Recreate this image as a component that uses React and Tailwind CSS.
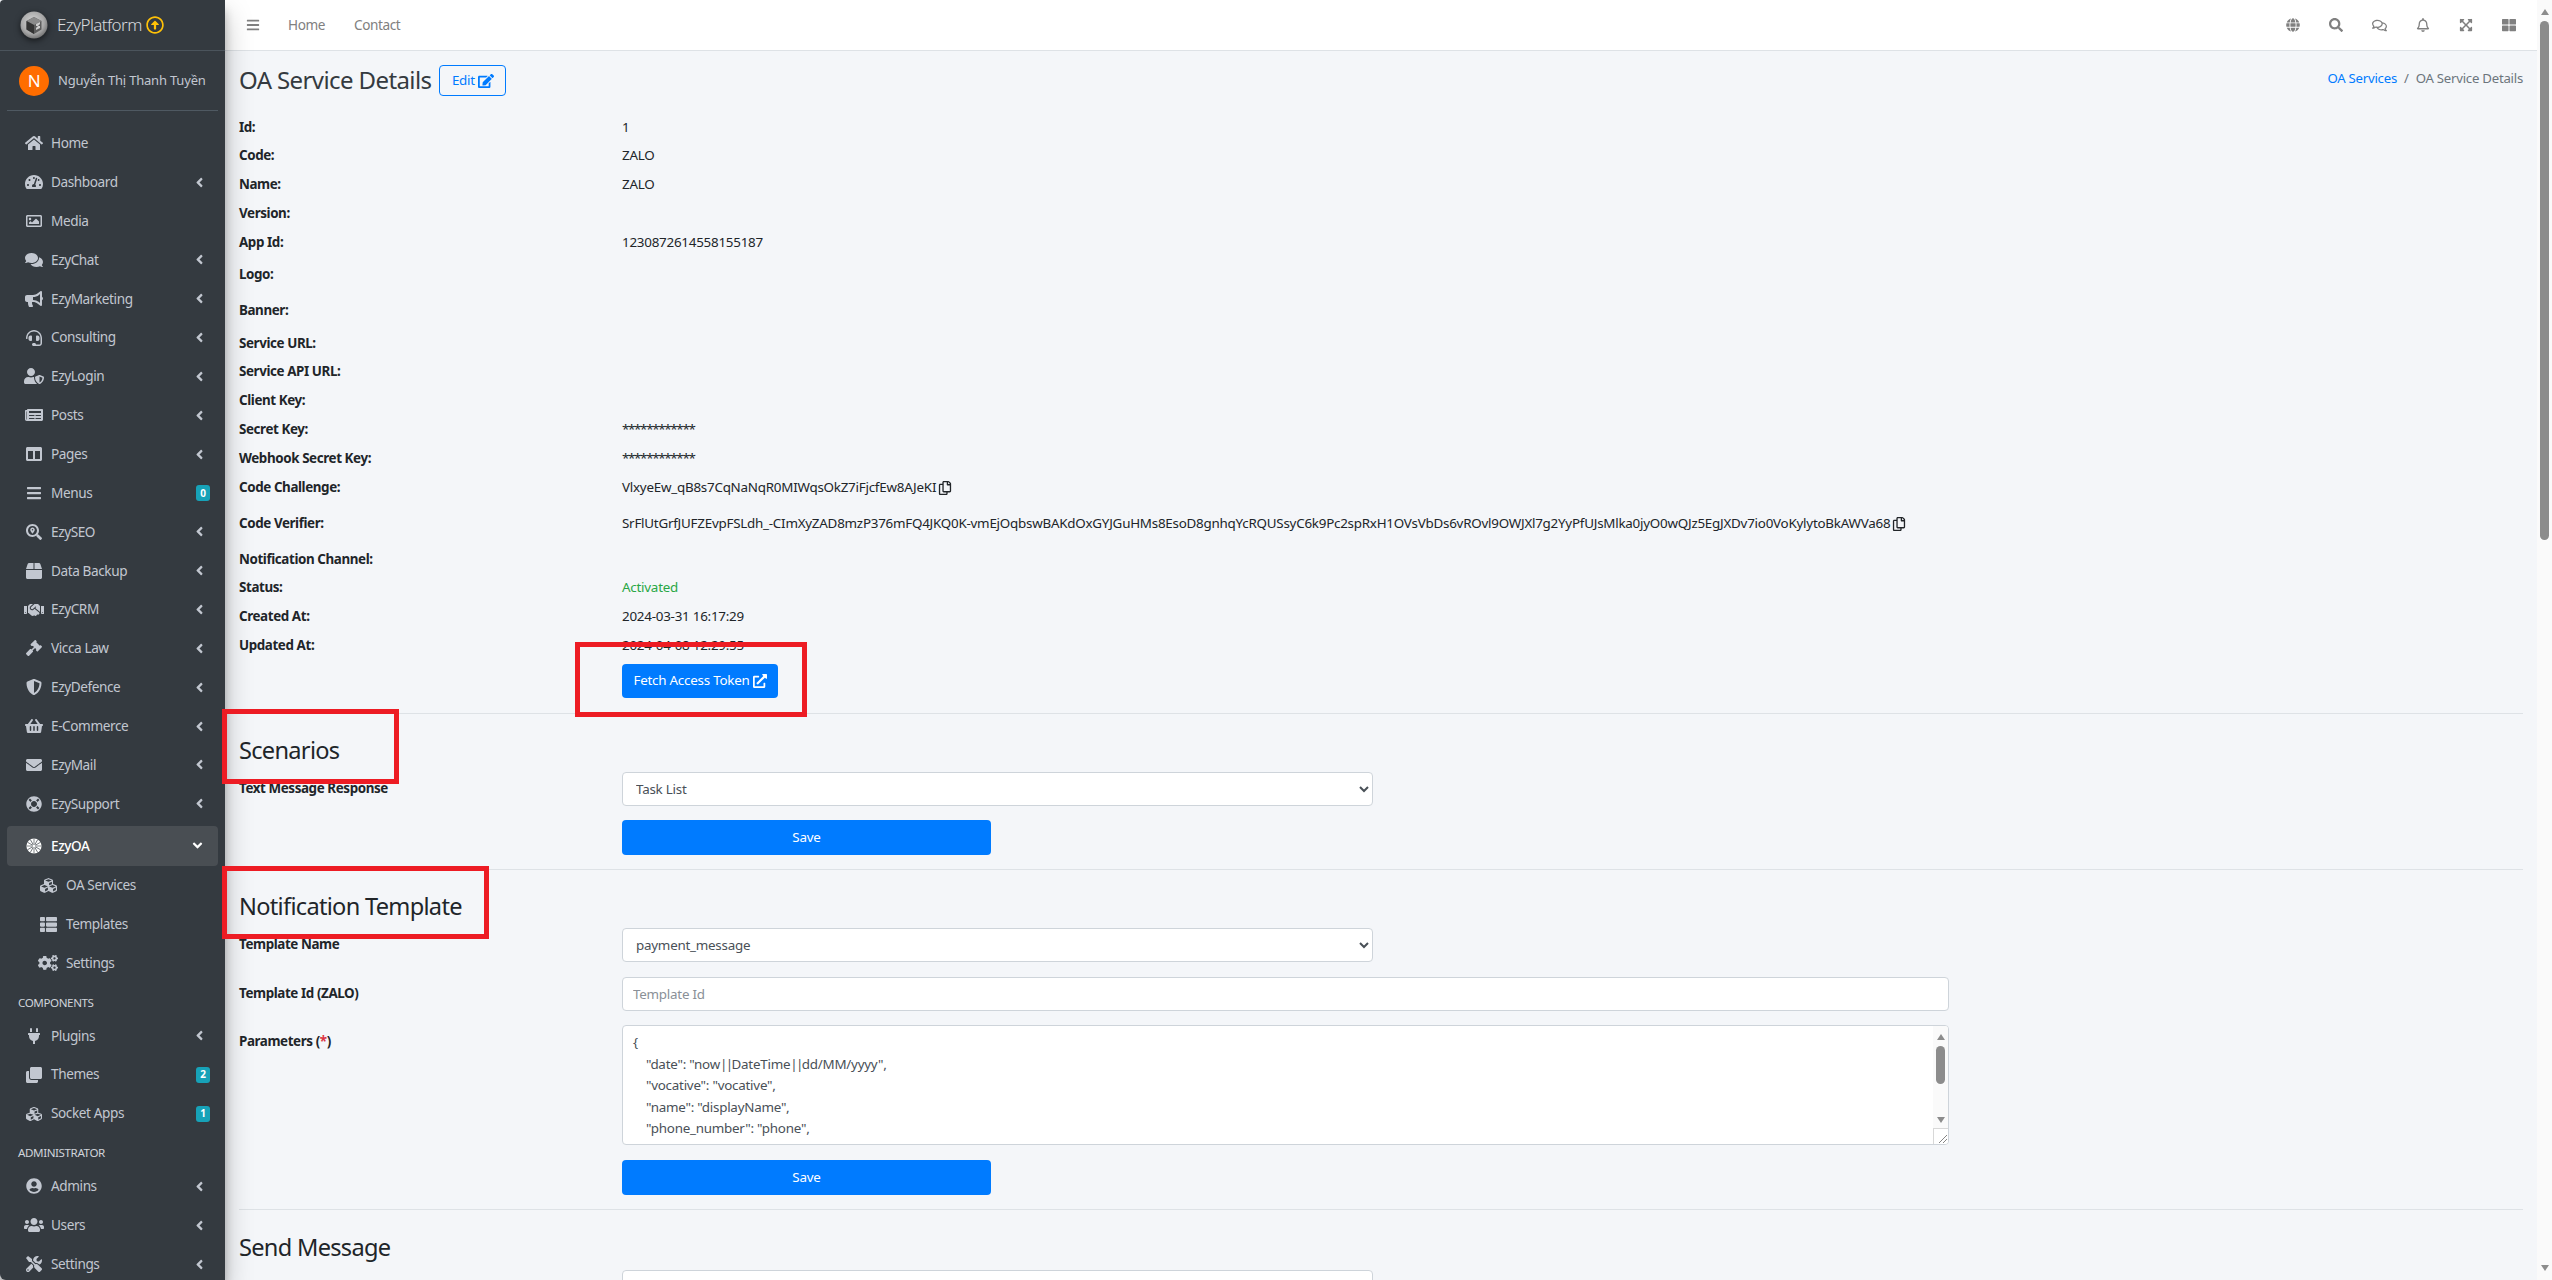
import React from "react";
import {
  FaHome, FaTachometerAlt, FaRegImage, FaComments, FaBullhorn, FaHeadset, FaUserShield, FaNewspaper, FaColumns, FaBars,
  FaSearchLocation, FaBox, FaHandshake, FaGavel, FaShieldAlt, FaShoppingBasket, FaEnvelope, FaLifeRing, FaCubes, FaThList,
  FaCogs, FaPlug, FaClone, FaUserCircle, FaUsers, FaTools, FaGlobe, FaSearch, FaRegComments, FaRegBell, FaExpandArrowsAlt,
  FaThLarge, FaEdit, FaExternalLinkAlt, FaRegCopy, FaAngleLeft, FaAngleDown, FaRegArrowAltCircleUp,
} from "react-icons/fa";

const FONT = "font-['Noto_Sans','Liberation_Sans',sans-serif]";

function Logo() {
  return (
    <svg width="28" height="28" viewBox="0 0 28 28" className="shrink-0 drop-shadow-[0_2px_3px_rgba(0,0,0,0.6)]">
      <defs>
        <radialGradient id="lg" cx="45%" cy="40%" r="60%">
          <stop offset="0%" stopColor="#d8d8d8" />
          <stop offset="70%" stopColor="#a8a8a8" />
          <stop offset="100%" stopColor="#777" />
        </radialGradient>
      </defs>
      <circle cx="14" cy="14" r="13.5" fill="url(#lg)" />
      <path d="M14 6l7.5 4v8.5L14 23l-7.5-4.5V10z" fill="#5c5c5c" />
      <path d="M14 6l7.5 4-7.5 4-7.5-4z" fill="#8a8a8a" />
      <path d="M14 14v9l-7.5-4.5V10z" fill="#333" />
      <path d="M16 13l4-2v2l-2 2 2 0v2l-4 2v-2l2-2-2 0z" fill="#ccc" />
    </svg>
  );
}

function OaIcon() {
  const spokes = [0, 30, 60, 90, 120, 150];
  return (
    <svg width="16" height="16" viewBox="0 0 16 16">
      <circle cx="8" cy="8" r="7.6" fill="#fff" />
      {spokes.map((a) => (
        <line key={a} x1="8" y1="0.5" x2="8" y2="15.5" stroke="#4b5055" strokeWidth="0.7" transform={`rotate(${a} 8 8)`} />
      ))}
      <circle cx="8" cy="8" r="1.5" fill="#fff" />
    </svg>
  );
}

function Item({ icon: Icon, label, arrow, badge, size = 16 }) {
  return (
    <div className="flex h-[38.85px] shrink-0 items-center pl-[22px] pr-[15px] text-[#c2c7d0]">
      <span className="flex w-[24px] justify-center"><Icon size={size} /></span>
      <span className="ml-[5px] flex-1 whitespace-nowrap">{label}</span>
      {arrow && <FaAngleLeft size={15} className="mr-[3px]" />}
      {badge && (
        <span className="flex h-[16px] w-[14px] items-center justify-center rounded-[3px] bg-[#17a2b8] text-[10px] font-bold tracking-normal text-white">{badge}</span>
      )}
    </div>
  );
}

function SubItem({ icon: Icon, label, size = 17 }) {
  return (
    <div className="flex h-[38.85px] shrink-0 items-center pl-[37px] text-[#c2c7d0]">
      <span className="flex w-[22px] justify-center"><Icon size={size} /></span>
      <span className="ml-[7px] whitespace-nowrap">{label}</span>
    </div>
  );
}

function Sidebar() {
  return (
    <aside className="z-10 flex h-[1280px] w-[225px] shrink-0 flex-col overflow-hidden rounded-tl-[4px] rounded-bl-[6px] bg-[#343a40] text-[13.6px] tracking-[-0.03em] shadow-[0_14px_28px_rgba(0,0,0,0.25),0_10px_10px_rgba(0,0,0,0.22)]">
      <div className="flex h-[51px] shrink-0 items-center gap-[9px] border-b border-[#4b545c] pl-[20px] pb-[1px]">
        <Logo />
        <span className="text-[17px] font-light tracking-[-0.035em] text-[#d8dbde]">EzyPlatform</span>
        <FaRegArrowAltCircleUp size={18} className="-ml-[5px] text-[#ffc107]" />
      </div>
      <div className="mx-[7px] flex h-[60px] shrink-0 items-center gap-[9px] border-b border-[#4f5962] pl-[12px] pt-[1px]">
        <span className="flex h-[30px] w-[30px] items-center justify-center rounded-full bg-[#ff6d00] text-[17px] text-white">N</span>
        <span className="whitespace-nowrap text-[13px] tracking-[-0.015em] text-[#c2c7d0]">Nguyễn Thị Thanh Tuyền</span>
      </div>
      <nav className="mt-[13px] flex shrink-0 flex-col">
        <Item icon={FaHome} label="Home" size={18} />
        <Item icon={FaTachometerAlt} label="Dashboard" arrow size={18} />
        <Item icon={FaRegImage} label="Media" />
        <Item icon={FaComments} label="EzyChat" arrow size={18} />
        <Item icon={FaBullhorn} label="EzyMarketing" arrow size={18} />
        <Item icon={FaHeadset} label="Consulting" arrow />
        <Item icon={FaUserShield} label="EzyLogin" arrow size={20} />
        <Item icon={FaNewspaper} label="Posts" arrow size={18} />
        <Item icon={FaColumns} label="Pages" arrow />
        <Item icon={FaBars} label="Menus" badge="0" />
        <Item icon={FaSearchLocation} label="EzySEO" arrow />
        <Item icon={FaBox} label="Data Backup" arrow />
        <Item icon={FaHandshake} label="EzyCRM" arrow size={20} />
        <Item icon={FaGavel} label="Vicca Law" arrow />
        <Item icon={FaShieldAlt} label="EzyDefence" arrow />
        <Item icon={FaShoppingBasket} label="E-Commerce" arrow size={18} />
        <Item icon={FaEnvelope} label="EzyMail" arrow />
        <Item icon={FaLifeRing} label="EzySupport" arrow />
        <div className="mx-[7px] mt-[2.7px] flex h-[40px] shrink-0 items-center rounded-[4px] bg-[#494e53] pl-[15px] pr-[13px] text-white">
          <span className="flex w-[24px] justify-center"><OaIcon /></span>
          <span className="ml-[5px] flex-1 font-medium">EzyOA</span>
          <FaAngleDown size={15} />
        </div>
        <SubItem icon={FaCubes} label="OA Services" />
        <SubItem icon={FaThList} label="Templates" />
        <SubItem icon={FaCogs} label="Settings" size={20} />
        <div className="flex h-[34px] shrink-0 items-center pl-[18px] pt-[6px] text-[11.6px] text-[#d0d4db]">COMPONENTS</div>
        <Item icon={FaPlug} label="Plugins" arrow />
        <Item icon={FaClone} label="Themes" badge="2" />
        <Item icon={FaCubes} label="Socket Apps" badge="1" />
        <div className="flex h-[34px] shrink-0 items-center pl-[18px] pt-[6px] text-[11.6px] text-[#d0d4db]">ADMINISTRATOR</div>
        <Item icon={FaUserCircle} label="Admins" arrow />
        <Item icon={FaUsers} label="Users" arrow size={20} />
        <Item icon={FaTools} label="Settings" arrow />
      </nav>
    </aside>
  );
}

function TopBar() {
  return (
    <header className="flex h-[51px] shrink-0 items-center border-b border-[#dee2e6] bg-white text-[13.6px] tracking-[-0.03em] text-[#808080]">
      <FaBars size={14} className="ml-[21px]" />
      <span className="ml-[28px]">Home</span>
      <span className="ml-[29px]">Contact</span>
      <div className="ml-auto mr-[21px] flex items-center gap-[29px]">
        <FaGlobe size={14} />
        <FaSearch size={14} />
        <FaRegComments size={15} />
        <FaRegBell size={14} />
        <FaExpandArrowsAlt size={14} />
        <FaThLarge size={14} />
      </div>
    </header>
  );
}

const rows = [
  { k: "Id:", v: "1", h: "h-[28px]" },
  { k: "Code:", v: "ZALO", h: "h-[29px]" },
  { k: "Name:", v: "ZALO", h: "h-[29px]" },
  { k: "Version:", h: "h-[29px]" },
  { k: "App Id:", v: "1230872614558155187", h: "h-[32px]" },
  { k: "Logo:", h: "h-[36px]" },
  { k: "Banner:", h: "h-[33px]" },
  { k: "Service URL:", h: "h-[28px]" },
  { k: "Service API URL:", h: "h-[29px]" },
  { k: "Client Key:", h: "h-[29px]" },
  { k: "Secret Key:", v: "************", stars: true, h: "h-[29px]" },
  { k: "Webhook Secret Key:", v: "************", stars: true, h: "h-[29px]" },
  { k: "Code Challenge:", v: "VlxyeEw_qB8s7CqNaNqR0MIWqsOkZ7iFjcfEw8AJeKI", copy: true, h: "h-[36px]" },
  { k: "Code Verifier:", v: "SrFlUtGrfJUFZEvpFSLdh_-CImXyZAD8mzP376mFQ4JKQ0K-vmEjOqbswBAKdOxGYJGuHMs8EsoD8gnhqYcRQUSsyC6k9Pc2spRxH1OVsVbDs6vROvl9OWJXl7g2YyPfUJsMlka0jyO0wQJz5EgJXDv7io0VoKylytoBkAWVa68", copy: true, h: "h-[36px]" },
  { k: "Notification Channel:", h: "h-[28px]" },
  { k: "Status:", v: "Activated", green: true, h: "h-[29px]" },
  { k: "Created At:", v: "2024-03-31 16:17:29", h: "h-[29px]" },
  { k: "Updated At:", v: "2024-04-08 12:29:55", h: "h-[33px]" },
];

function Heading({ children, cls }) {
  return <h2 className={`text-[23.6px] leading-[31px] tracking-[-0.03em] text-[#212529] ${cls}`}>{children}</h2>;
}

function Label({ children }) {
  return <label className="h-[34px] w-[383px] shrink-0 text-[13.4px] font-bold leading-[33px] tracking-[-0.03em] text-[#212529]">{children}</label>;
}

function Sel({ value }) {
  return (
    <select defaultValue={value} className="h-[34px] w-[751px] rounded-[4px] border border-[#ced4da] bg-white pl-[9px] pr-[5px] text-[13.4px] tracking-[-0.018em] text-[#495057]">
      <option value={value}>{value}</option>
    </select>
  );
}

function SaveBtn() {
  return <button className="flex h-[35px] w-[369px] items-center justify-center rounded-[4px] bg-[#007bff] text-[13.4px] text-white">Save</button>;
}

function TextArea() {
  const lines = [
    "{",
    <>{'    "date": "now'}<span className="tracking-[-0.12em]">||</span>DateTime<span className="tracking-[-0.12em]">||</span>{'dd/MM/yyyy",'}</>,
    '    "vocative": "vocative",',
    '    "name": "displayName",',
    '    "phone_number": "phone",',
  ];
  return (
    <div className="relative h-[120px] w-[1327px] overflow-hidden rounded-[4px] border border-[#ced4da] bg-white pl-[10px] pt-[6px] text-[13.4px] leading-[21.6px] tracking-[-0.018em] text-[#495057]">
      {lines.map((l, i) => (<div key={i} className="whitespace-pre">{l}</div>))}
      <div className="absolute right-0 top-0 flex h-[103px] w-[15px] flex-col items-center bg-[#fafafa]">
        <div className="mt-[8px] h-0 w-0 border-x-[4px] border-b-[6px] border-x-transparent border-b-[#8c8c8c]" />
        <div className="mt-[6px] h-[38px] w-[9px] rounded-full bg-[#8c8c8c]" />
        <div className="mt-auto mb-[6px] h-0 w-0 border-x-[4px] border-t-[6px] border-x-transparent border-t-[#8c8c8c]" />
      </div>
      <div className="absolute bottom-0 right-0 h-[16px] w-[15px] border-l border-t border-[#d8d8d8] bg-white">
        <svg width="14" height="15" viewBox="0 0 14 15"><path d="M5 14l8-8M9 14l4-4" stroke="#666" strokeWidth="0.8" /></svg>
      </div>
    </div>
  );
}

function Main() {
  return (
    <div className="flex min-w-0 flex-1 flex-col">
      <TopBar />
      <main className="flex-1 overflow-hidden bg-[#f4f6f9] px-[14px] text-[13.4px] tracking-[-0.018em] text-[#212529]">
        <div className="flex h-[62px] items-center pb-[3px]">
          <h1 className="pb-[2px] text-[24px] leading-[31px] tracking-[-0.025em] text-[#343a40]">OA Service Details</h1>
          <button className="ml-[8px] flex h-[31px] w-[67px] items-center justify-center gap-[3px] rounded-[4px] border border-[#007bff] text-[13.4px] text-[#007bff]">
            Edit <FaEdit size={16} />
          </button>
          <div className="ml-auto flex items-center gap-[7px] pb-[3px] text-[13.2px]">
            <span className="text-[#007bff]">OA Services</span>
            <span className="text-[#6c757d]">/</span>
            <span className="text-[#6c757d]">OA Service Details</span>
          </div>
        </div>
        <div className="flex flex-col">
          {rows.map((r) => (
            <div key={r.k} className={`flex ${r.h}`}>
              <div className="w-[383px] shrink-0 font-bold leading-[29px] tracking-[-0.03em]">{r.k}</div>
              {r.v && (
                <div className={`flex h-[29px] items-center gap-[2px] whitespace-nowrap ${r.green ? "text-[#28a745]" : ""} ${r.stars ? "tracking-[-0.1em]" : ""}`}>
                  {r.v}
                  {r.copy && <FaRegCopy size={14} />}
                </div>
              )}
            </div>
          ))}
        </div>
        <div className="pl-[383px]">
          <button className="flex h-[34px] w-[156px] items-center justify-center gap-[3px] rounded-[4px] bg-[#007bff] pb-[1px] text-white">
            Fetch Access Token <FaExternalLinkAlt size={14} />
          </button>
        </div>
        <hr className="mt-[15px] border-[#dee2e6]" />
        <Heading cls="mt-[21px] mb-[6px]">Scenarios</Heading>
        <div className="flex">
          <Label>Text Message Response</Label>
          <div className="flex flex-col gap-[14px]">
            <Sel value="Task List" />
            <SaveBtn />
          </div>
        </div>
        <hr className="mt-[14px] border-[#dee2e6]" />
        <Heading cls="mt-[21px] mb-[6px]">Notification Template</Heading>
        <div className="flex">
          <Label>Template Name</Label>
          <Sel value="payment_message" />
        </div>
        <div className="mt-[15px] flex">
          <Label>Template Id (ZALO)</Label>
          <input placeholder="Template Id" className="h-[34px] w-[1327px] rounded-[4px] border border-[#ced4da] bg-white px-[10px] text-[13.4px] placeholder:text-[#8a9097]" />
        </div>
        <div className="mt-[14px] flex">
          <Label>Parameters (<span className="text-[#dc3545]">*</span>)</Label>
          <div className="flex flex-col gap-[15px]">
            <TextArea />
            <SaveBtn />
          </div>
        </div>
        <hr className="mt-[14px] border-[#dee2e6]" />
        <Heading cls="mt-[22px] mb-[7px]">Send Message</Heading>
        <div className="pl-[383px]">
          <Sel value="" />
        </div>
      </main>
    </div>
  );
}

function PageScrollbar() {
  return (
    <div className="flex h-[1280px] w-[15px] shrink-0 flex-col items-center bg-[#fafafa]">
      <div className="mt-[9px] h-0 w-0 border-x-[4px] border-b-[6px] border-x-transparent border-b-[#8c8c8c]" />
      <div className="mt-[6px] h-[519px] w-[9px] rounded-full bg-[#8c8c8c]" />
      <div className="mt-auto mb-[9px] h-0 w-0 border-x-[4px] border-t-[6px] border-x-transparent border-t-[#8c8c8c]" />
    </div>
  );
}

function RedBox({ cls }) {
  return <div className={`pointer-events-none absolute z-20 border-[5px] border-[#ed1c24] ${cls}`} />;
}

export default function App() {
  return (
    <div className={`relative flex h-[1280px] w-[2552px] overflow-hidden bg-[#f4f6f9] ${FONT}`}>
      <Sidebar />
      <Main />
      <PageScrollbar />
      <RedBox cls="left-[575px] top-[642px] h-[75px] w-[232px]" />
      <RedBox cls="left-[222px] top-[709px] h-[75px] w-[177px]" />
      <RedBox cls="left-[222px] top-[866px] h-[73px] w-[267px]" />
    </div>
  );
}
